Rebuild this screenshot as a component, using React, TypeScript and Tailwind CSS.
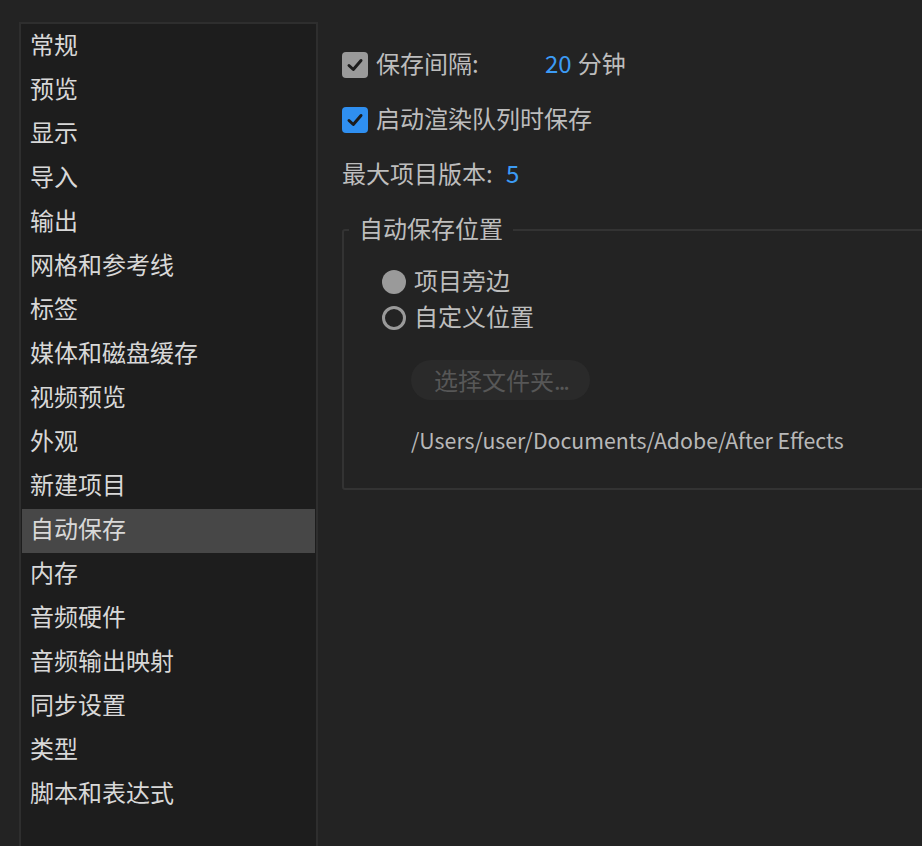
import React from 'react';

const cjk = { fontFamily: '"Noto Sans CJK SC", "Noto Sans", sans-serif' };

const sections = [
  '常规',
  '预览',
  '显示',
  '导入',
  '输出',
  '网格和参考线',
  '标签',
  '媒体和磁盘缓存',
  '视频预览',
  '外观',
  '新建项目',
  '自动保存',
  '内存',
  '音频硬件',
  '音频输出映射',
  '同步设置',
  '类型',
  '脚本和表达式',
];

function Check({ blue }: { blue?: boolean }) {
  return (
    <span
      className={
        'flex h-[26px] w-[26px] flex-none items-center justify-center rounded-[4px] ' +
        (blue ? 'bg-[#2f8ff0]' : 'bg-[#9a9a9a]')
      }
    >
      <svg width="20" height="20" viewBox="0 0 20 20">
        <polyline
          points="4,10.5 8.3,14.5 16,5.5"
          fill="none"
          stroke="#1c1c1c"
          strokeWidth="3"
          strokeLinecap="round"
          strokeLinejoin="round"
        />
      </svg>
    </span>
  );
}

export default function App() {
  const selected = '自动保存';

  return (
    <div className="flex h-[846px] w-full overflow-hidden bg-[#232323] pl-[19px] pt-[22px]" style={cjk}>
      <div className="h-[900px] w-[299px] flex-none border-2 border-[#2e2e2e] bg-[#1d1d1d] p-px">
        {sections.map((s) => (
          <div
            key={s}
            className={
              'flex h-[44px] items-center pb-[6px] pl-[8px] text-[24px] text-[#d8d8d8] ' +
              (s === selected ? 'bg-[#474747]' : '')
            }
          >
            {s}
          </div>
        ))}
      </div>

      <div className="ml-[24px] w-[640px] flex-none pt-[25px] text-[24px] text-[#bdbdbd]">
        <div className="flex h-[36px] items-center">
          <Check />
          <span className="ml-[8px] w-[169px] -translate-y-[2px]">保存间隔:</span>
          <span className="-translate-y-[2px] text-[#3c9bf5]">20</span>
          <span className="ml-[6px] -translate-y-[2px]">分钟</span>
        </div>

        <div className="mt-[19px] flex h-[36px] items-center">
          <Check blue />
          <span className="ml-[8px] -translate-y-[2px]">启动渲染队列时保存</span>
        </div>

        <div className="mt-[19px] flex h-[36px] items-center pb-[4px]">
          <span className="w-[164px]">最大项目版本:</span>
          <span className="text-[#3c9bf5]">5</span>
        </div>

        <fieldset className="mt-[22px] rounded-[3px] border-2 border-[#333333] pb-[33px]">
          <legend className="ml-[5px] px-[10px] leading-[30px]">
            <span className="relative -top-[2px]">自动保存位置</span>
          </legend>

          <div className="mt-[19px] pl-[38px]">
            <div className="flex h-[36px] items-center">
              <span className="h-[24px] w-[24px] rounded-full bg-[#9a9a9a]" />
              <span className="ml-[8px] -translate-y-[2px]">项目旁边</span>
            </div>
            <div className="flex h-[36px] items-center">
              <span className="h-[24px] w-[24px] rounded-full border-[3px] border-[#9a9a9a]" />
              <span className="ml-[8px] -translate-y-[2px]">自定义位置</span>
            </div>
          </div>

          <div className="mt-[24px] pl-[67px]">
            <button className="block h-[40px] w-[179px] whitespace-nowrap rounded-full bg-[#2a2a2a] pl-[23px] text-left text-[24px] leading-[36px] text-[#575757]">
              选择文件夹<span className="tracking-[-2px]">...</span>
            </button>
            <div className="mt-[25px] text-[21.3px] leading-[30px] text-[#b8b8b8]">
              /Users/user/Documents/Adobe/After Effects
            </div>
          </div>
        </fieldset>
      </div>
    </div>
  );
}
